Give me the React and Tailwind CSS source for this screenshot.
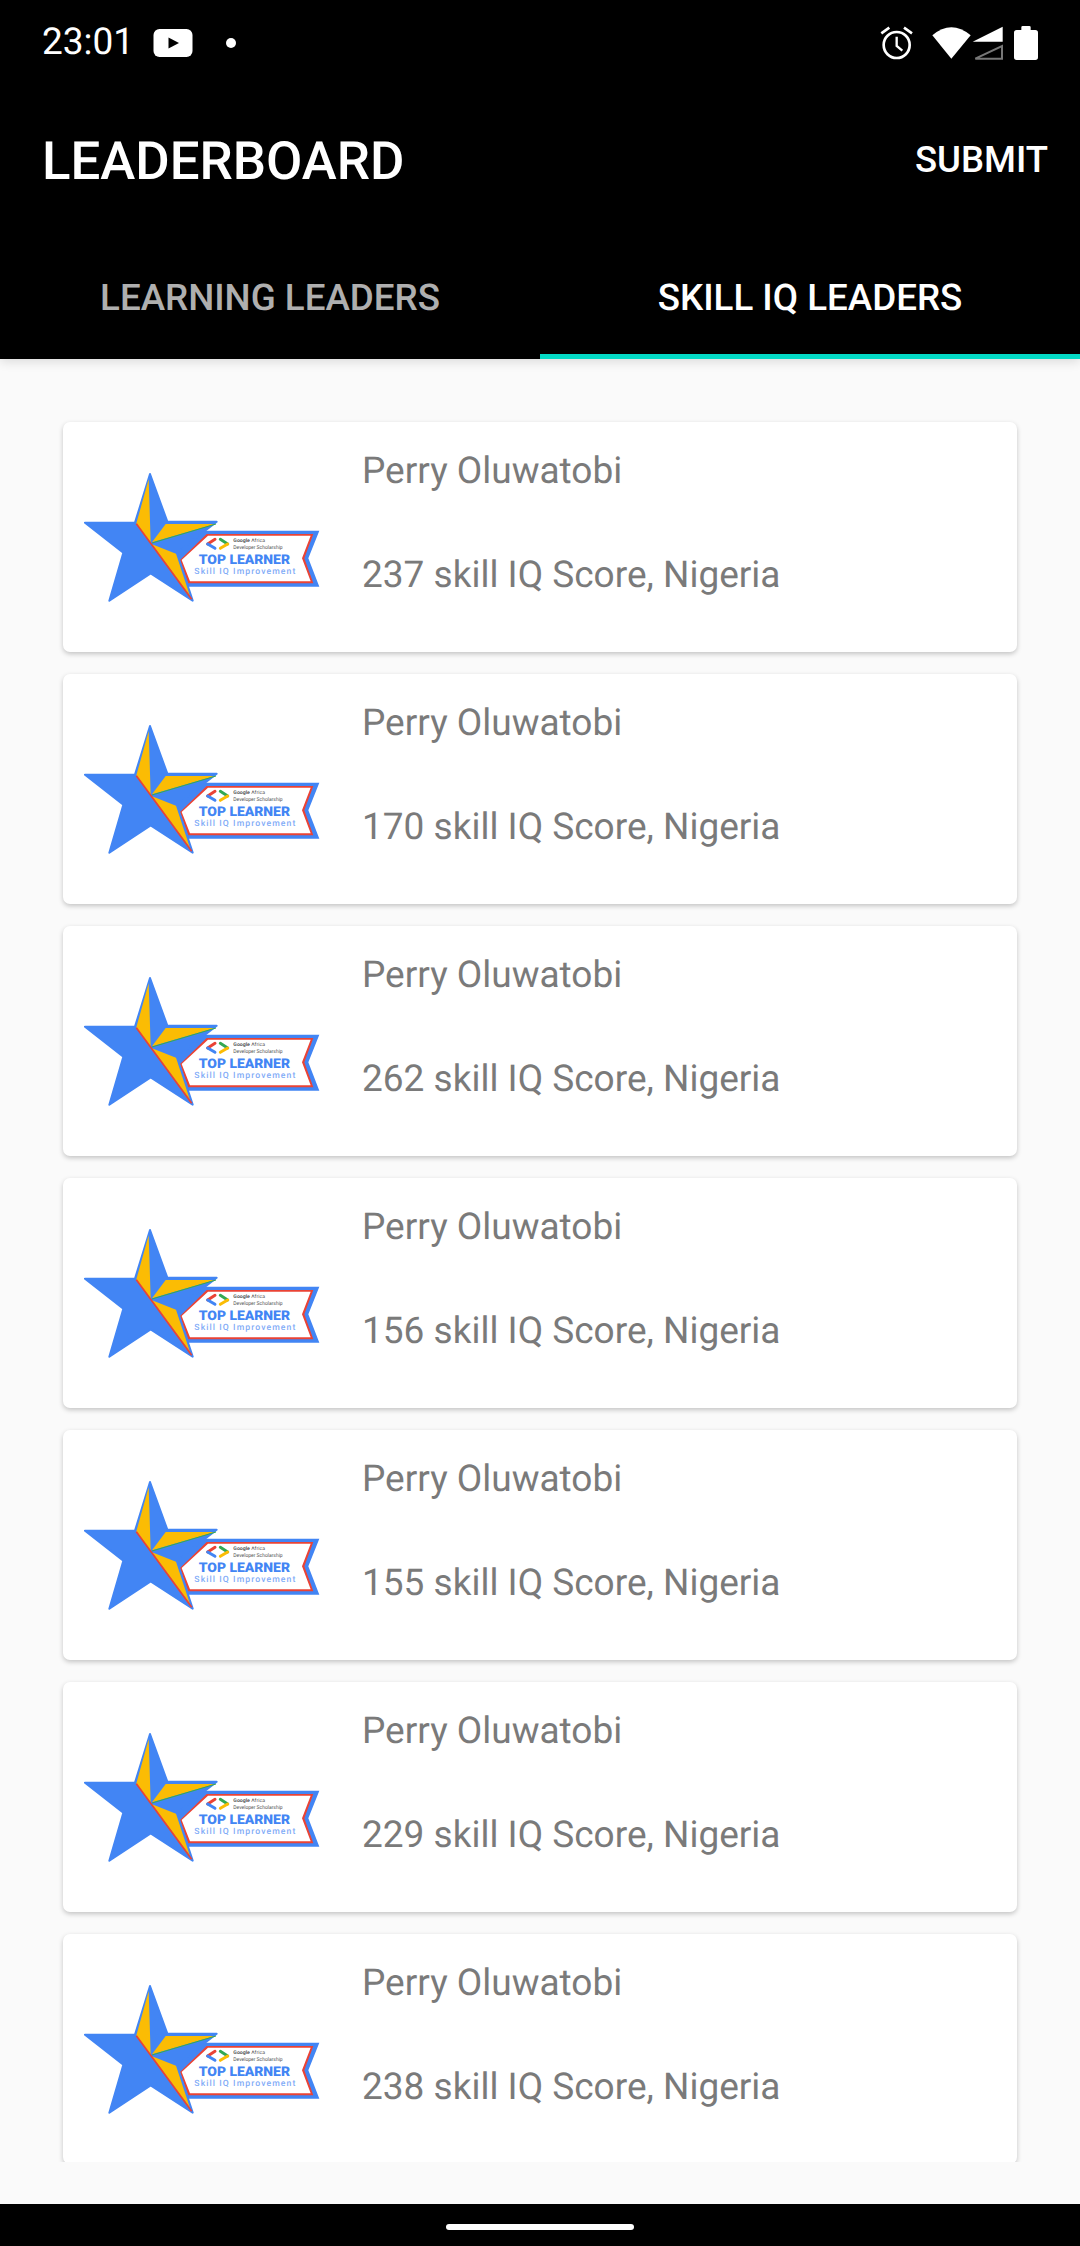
const ROWS = [237, 170, 262, 156, 155, 229, 238];

function StatusIcons() {
  return (
    <svg viewBox="0 0 660 180" className="w-[220px] h-[60px] shrink-0">
      <circle cx="110" cy="105" r="39" fill="none" stroke="#fff" strokeWidth="8" />
      <path d="M110 80V108L127 122" fill="none" stroke="#fff" strokeWidth="7" />
      <path d="M64 70L88 53M156 70L132 53" stroke="#fff" strokeWidth="8" />
      <path d="M217 76Q274 28 332 76L274 146Z" fill="#fff" />
      <path d="M338 95L428 50V95Z" fill="#fff" />
      <path d="M346 146L426 108V146Z" fill="none" stroke="#777" strokeWidth="6" />
      <path d="M484 60V52Q484 48 488 48H508Q512 48 512 52V60H526Q534 60 534 68V142Q534 150 526 150H470Q462 150 462 142V68Q462 60 470 60Z" fill="#fff" />
    </svg>
  );
}

function Badge() {
  return (
    <svg viewBox="9 6 870 690" className="w-[290px] h-[230px] shrink-0">
      <path d="M425 332H778L745 415L778 500H380L345 400Z" fill="#4285f4" />
      <path d="M440 342H760L733 415L760 490H385L360 420Z" fill="#ea4335" />
      <path d="M444 347H752L726 415L752 484H390L365 420Z" fill="#fff" />
      <path
        d="M270 162L322 305H470L350 398L398 542L272 460L148 542L190 398L75 308H225Z"
        fill="#4285f4"
        stroke="#4285f4"
        strokeWidth="6"
        strokeLinejoin="round"
      />
      <path d="M266 178L272 368L229 310Z" fill="#fbbc04" />
      <path d="M317 312H464L276 367Z" fill="#fbbc04" />
      <path d="M276 373L348 401L390 528Z" fill="#fbbc04" />
      <path d="M229 311L272 370L395 538" fill="none" stroke="#ea4335" strokeWidth="5" />
      <path d="M276 369L468 312" fill="none" stroke="#34a853" strokeWidth="3" />
      <path d="M465 358L443 372" stroke="#ea4335" strokeWidth="9" strokeLinecap="round" />
      <path d="M443 372L465 385" stroke="#4285f4" strokeWidth="9" strokeLinecap="round" />
      <path d="M481 358L503 372" stroke="#34a853" strokeWidth="9" strokeLinecap="round" />
      <path d="M503 372L481 385" stroke="#fbbc04" strokeWidth="9" strokeLinecap="round" />
      <text x="520" y="367" fontFamily="Roboto, sans-serif" fontSize="15" fill="#555" textLength="95" lengthAdjust="spacingAndGlyphs">
        <tspan fontWeight="700">Google</tspan> Africa
      </text>
      <text x="520" y="386" fontFamily="Roboto, sans-serif" fontSize="16" fill="#555" textLength="148" lengthAdjust="spacingAndGlyphs">
        Developer Scholarship
      </text>
      <text x="416" y="432" fontFamily="Roboto, sans-serif" fontSize="40" fontWeight="900" fill="#4285f4" textLength="274" lengthAdjust="spacingAndGlyphs">
        TOP LEARNER
      </text>
      <text x="403" y="461" fontFamily="Roboto, sans-serif" fontSize="26" fontWeight="500" fill="#7fabf7" textLength="303">
        Skill IQ Improvement
      </text>
    </svg>
  );
}

function Card({ score }) {
  return (
    <div className="flex h-[230px] shrink-0 rounded-[7px] bg-white shadow-[0_2px_5px_rgba(0,0,0,0.22)]">
      <Badge />
      <div className="flex flex-col gap-[61px] pl-[9px] pt-[28px] text-[37px] leading-[43px] text-[#7a7a7a]">
        <div>Perry Oluwatobi</div>
        <div>{score} skill IQ Score, Nigeria</div>
      </div>
    </div>
  );
}

export default function App() {
  return (
    <div className="flex h-[2246px] w-[1080px] flex-col overflow-hidden bg-[#fafafa] font-['Roboto',sans-serif] antialiased [text-rendering:geometricPrecision]">
      <header className="relative z-10 flex h-[359px] shrink-0 flex-col bg-black text-white shadow-[0_3px_10px_rgba(0,0,0,0.12)]">
        <div className="flex h-[63px] items-start justify-between pt-[10px]">
          <div className="flex items-center pl-[42px]">
            <span className="text-[37px] leading-[66px]">23:01</span>
            <svg viewBox="0 0 40 28" className="ml-[19px] h-[28px] w-[40px]">
              <rect x="0.5" width="39" height="28" rx="6" fill="#fff" />
              <path d="M15.5 8.5L26 14L15.5 19.5Z" fill="#000" />
            </svg>
            <span className="ml-[33px] h-[10px] w-[10px] rounded-full bg-white" />
          </div>
          <StatusIcons />
        </div>
        <div className="flex h-[170px] items-start justify-between pl-[42px] pr-[32px] pt-[67px]">
          <h1 className="text-[52.75px] font-medium leading-[62px]">LEADERBOARD</h1>
          <button className="pt-[8px] text-[36.5px] font-medium leading-[44px]">SUBMIT</button>
        </div>
        <div className="flex h-[126px] text-[36.75px] font-medium">
          <div className="flex h-full w-1/2 items-center justify-center border-b-[5px] border-transparent pt-[8px] text-white/70">LEARNING LEADERS</div>
          <div className="flex h-full w-1/2 items-center justify-center border-b-[5px] border-[#03dac5] pt-[8px]">
            SKILL IQ LEADERS
          </div>
        </div>
      </header>
      <main className="flex h-[1803px] shrink-0 flex-col gap-[22px] overflow-hidden px-[63px] pt-[63px]">
        {ROWS.map((s) => (
          <Card key={s} score={s} />
        ))}
      </main>
      <footer className="mt-[42px] flex h-[42px] shrink-0 justify-center bg-black pt-[20px]">
        <div className="h-[6px] w-[188px] rounded-full bg-white" />
      </footer>
    </div>
  );
}
